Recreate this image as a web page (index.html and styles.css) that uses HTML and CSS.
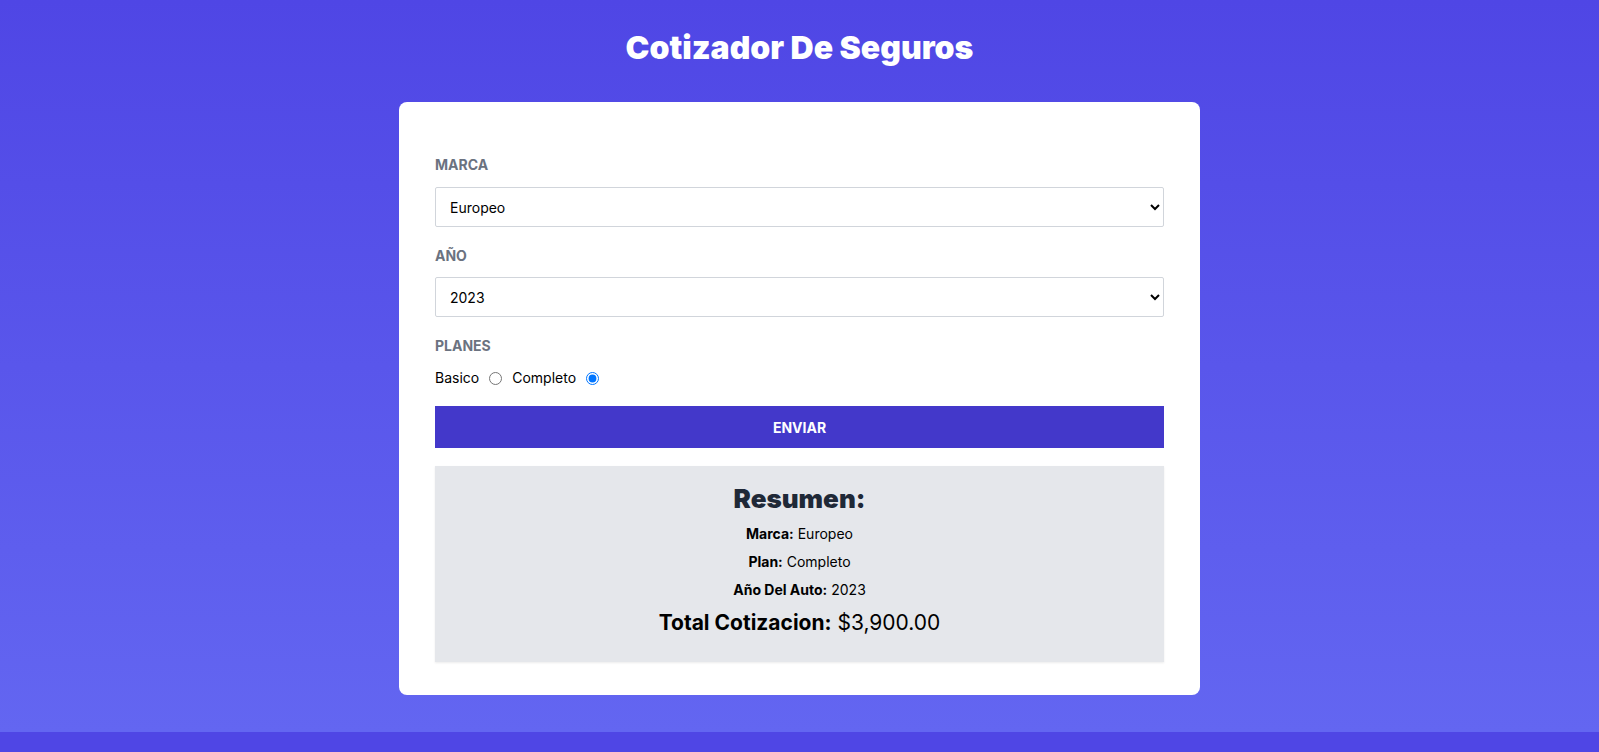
FILE: index.html
```html
<!DOCTYPE html>
<html lang="es">
<head>
<meta charset="utf-8">
<title>Cotizador De Seguros</title>
<link rel="stylesheet" href="styles.css">
</head>
<body>
<div class="page">
  <h1 class="title">Cotizador De Seguros</h1>
  <main class="card">
    <form class="form">
      <label class="label" for="marca">Marca</label>
      <select id="marca" class="select">
        <option>Europeo</option>
        <option>Americano</option>
        <option>Asiatico</option>
      </select>

      <label class="label label-gap" for="year">Año</label>
      <select id="year" class="select select-2">
        <option>2023</option>
        <option>2022</option>
      </select>

      <div class="label label-gap">Planes</div>
      <div class="radios">
        <label for="basico">Basico</label>
        <input type="radio" id="basico" name="plan" class="radio">
        <label for="completo">Completo</label>
        <input type="radio" id="completo" name="plan" class="radio" checked>
      </div>

      <button type="button" class="button">Enviar</button>
    </form>

    <section class="summary">
      <h2 class="summary-title">Resumen:</h2>
      <p class="summary-line"><strong>Marca:</strong> Europeo</p>
      <p class="summary-line"><strong>Plan:</strong> Completo</p>
      <p class="summary-line"><strong>Año Del Auto:</strong> 2023</p>
      <p class="summary-total"><strong>Total Cotizacion:</strong> $3,900.00</p>
    </section>
  </main>
</div>
</body>
</html>
```

FILE: styles.css
```css
html, body {
  margin: 0;
  padding: 0;
}

body {
  background: #4f46e5;
  font-family: "Inter", "Noto Sans", sans-serif;
  color: #000;
  min-height: 752px;
}

.page {
  background: linear-gradient(to bottom, #4f46e5, #6366f1);
  padding: 28px 0 37px;
}

.title {
  margin: 0;
  text-align: center;
  color: #fff;
  font-size: 32px;
  line-height: 40px;
  font-weight: 900;
}

.card {
  box-sizing: border-box;
  width: 801px;
  margin: 34px auto 0;
  background: #fff;
  border-radius: 8px;
  padding: 53px 36px 33px;
}

.form {
  display: flex;
  flex-direction: column;
}

.label {
  display: block;
  font-size: 14px;
  line-height: 20px;
  font-weight: 700;
  text-transform: uppercase;
  color: #6b7280;
}

.label-gap {
  margin-top: 19px;
}

.select {
  box-sizing: border-box;
  display: block;
  width: 100%;
  height: 40px;
  margin-top: 12px;
  padding: 0 8px 0 10px;
  font-family: inherit;
  font-size: 14px;
  color: #000;
  background: #fff;
  border: 1px solid #d1d5db;
  border-radius: 2px;
}

.select-2 {
  margin-top: 11px;
}

.radios {
  display: flex;
  align-items: center;
  margin-top: 12px;
  font-size: 14px;
  line-height: 20px;
}

.radio {
  margin: 0 10px;
  width: 13px;
  height: 13px;
}

.button {
  margin-top: 18px;
  height: 42px;
  width: 100%;
  border: 0;
  background: #4338ca;
  color: #fff;
  font-family: inherit;
  font-size: 14px;
  font-weight: 700;
  text-transform: uppercase;
  cursor: pointer;
}

.summary {
  margin-top: 18px;
  background: #e5e7eb;
  padding: 15px 0 25px;
  text-align: center;
  box-shadow: 0 1px 2px rgba(0, 0, 0, 0.08);
}

.summary-title {
  margin: 0 0 7px;
  font-size: 26px;
  line-height: 36px;
  font-weight: 900;
  color: #1f2937;
}

.summary-line {
  margin: 0 0 8px;
  font-size: 14px;
  line-height: 20px;
}

.summary-total {
  margin: 9px 0 0;
  font-size: 21px;
  line-height: 28px;
}
```
